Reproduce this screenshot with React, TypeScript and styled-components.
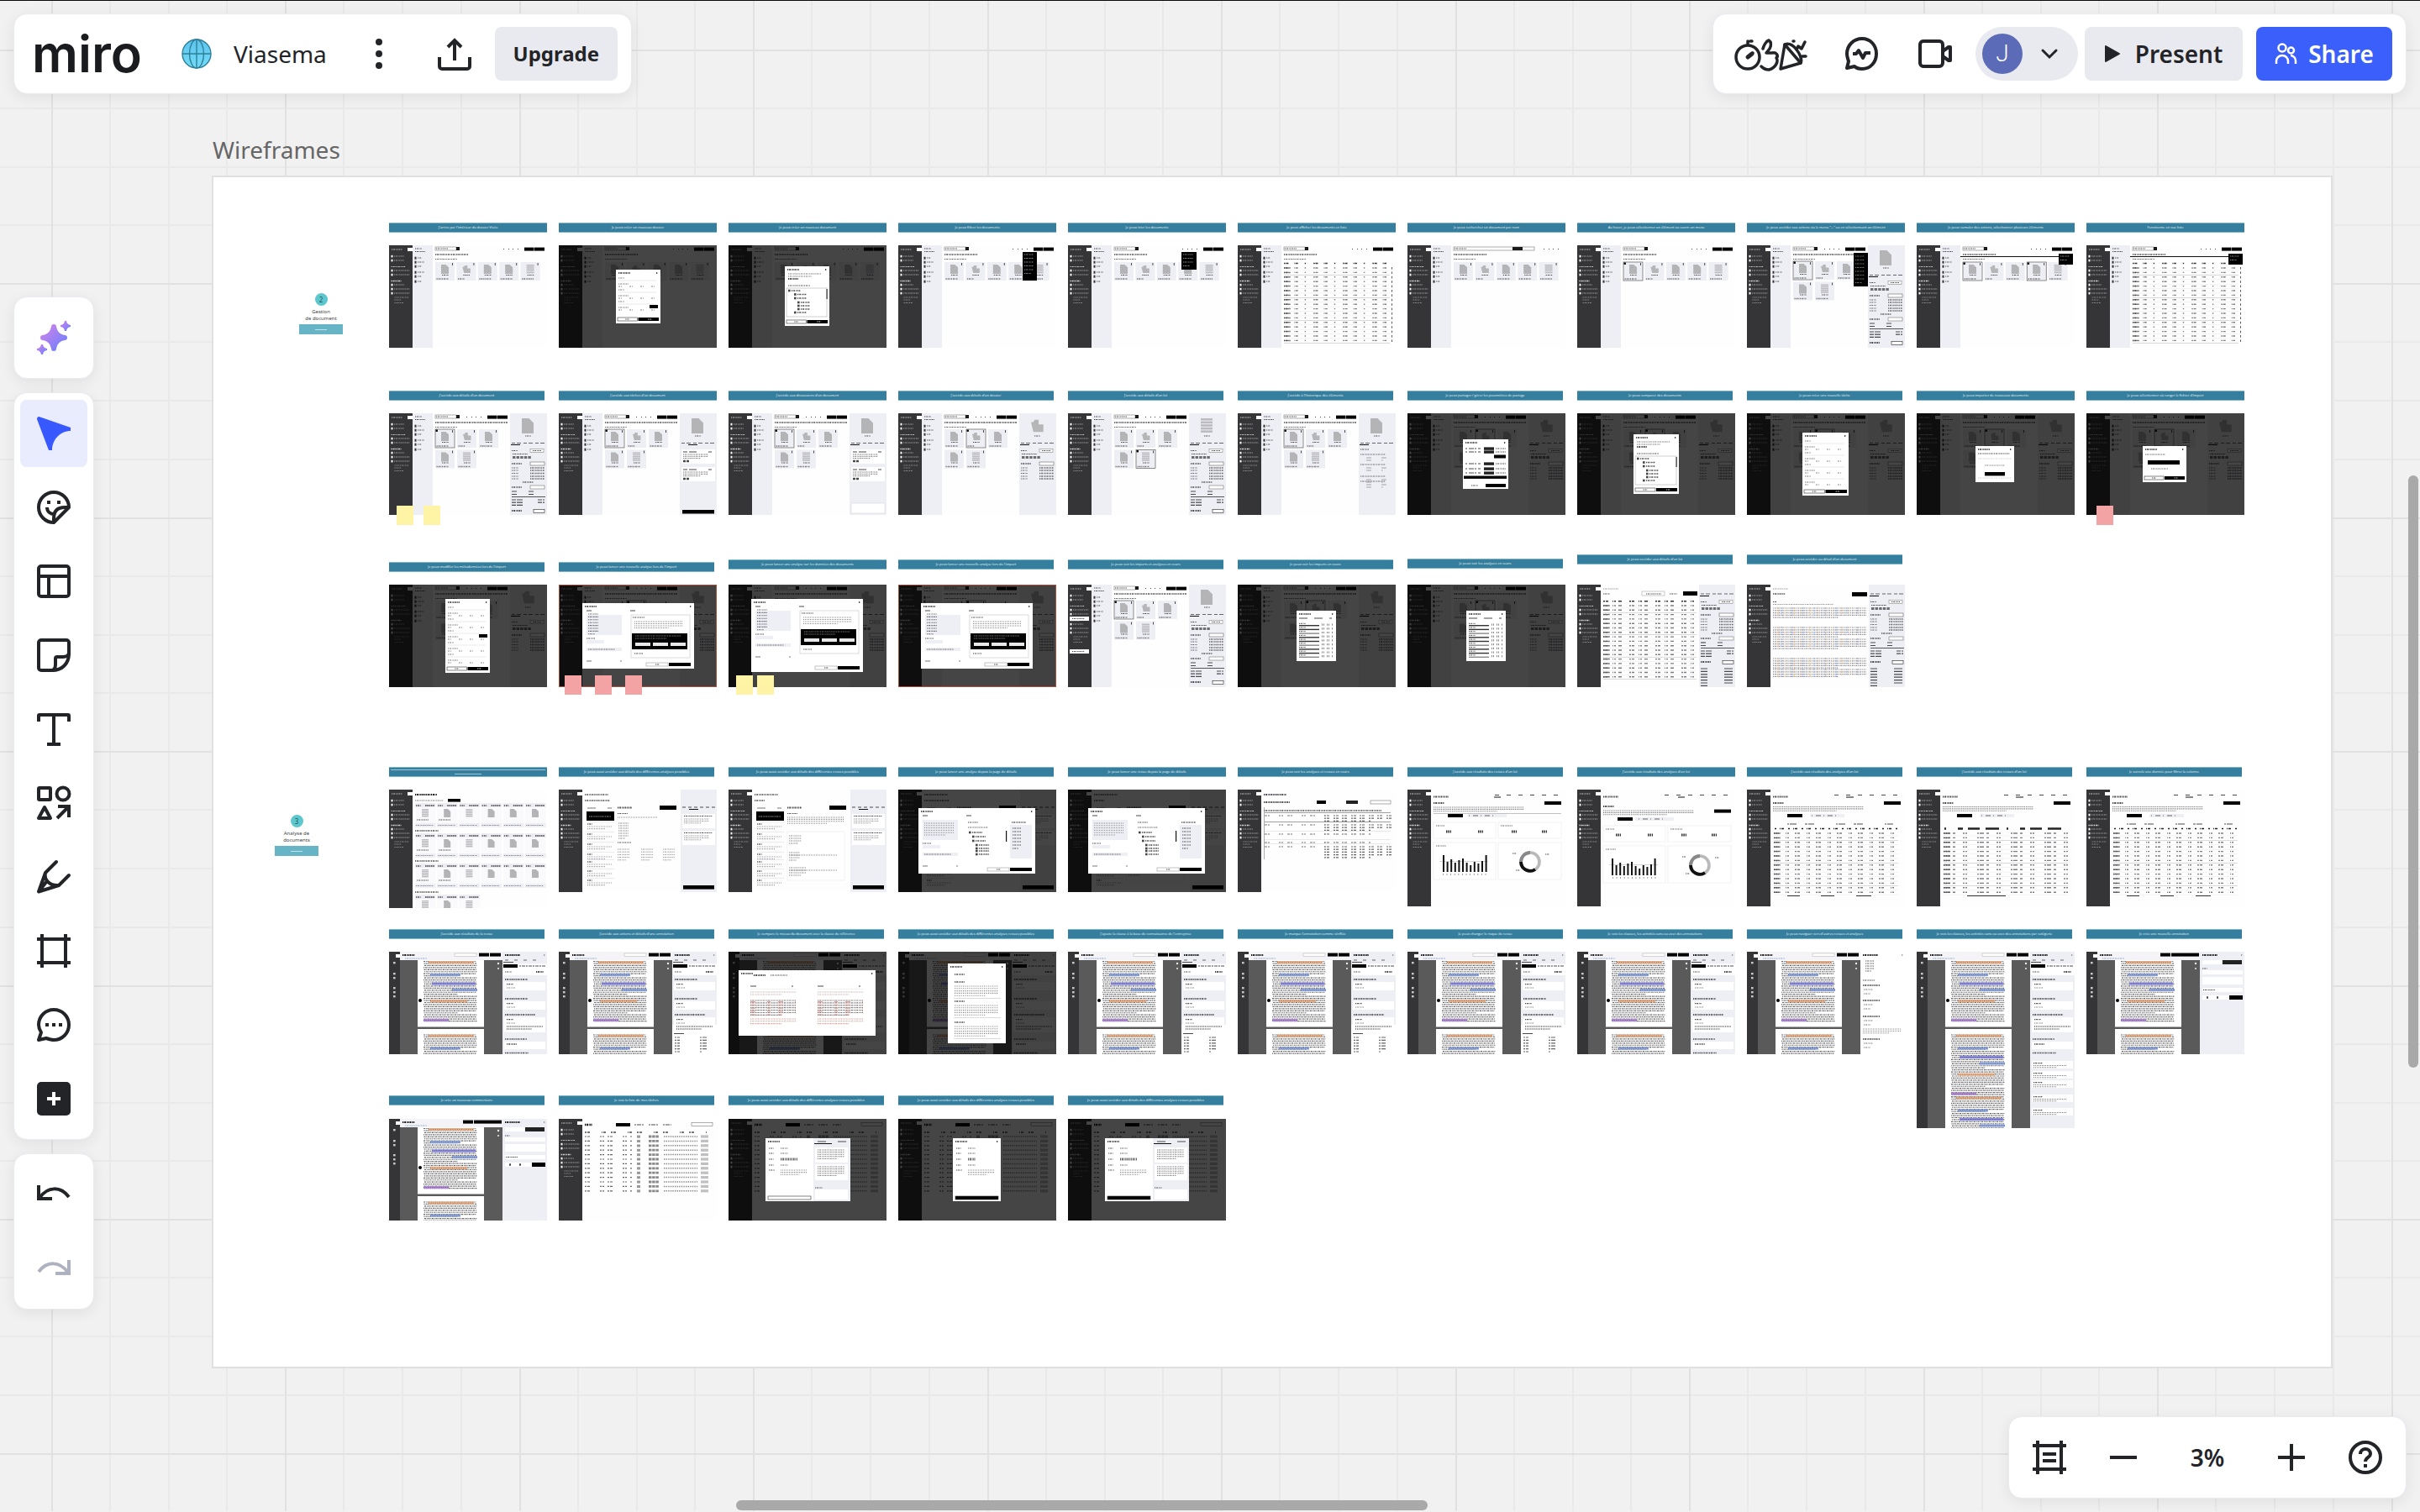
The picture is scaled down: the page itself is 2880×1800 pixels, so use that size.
import React from 'react';
import styled, { createGlobalStyle } from 'styled-components';

const INK = '#222428';

const GlobalStyle = createGlobalStyle`
  *, *::before, *::after { box-sizing: border-box; }
  html, body, #root { height: 100%; margin: 0; }
  body {
    overflow: hidden;
    color: ${INK};
    font-family: "Noto Sans", "Open Sans", sans-serif;
  }
  button { font: inherit; color: inherit; }
`;

/* ---------- page ---------- */

const Page = styled.main`
  position: relative;
  height: 100%;
  overflow: hidden;
  background: #f1f1f1;
  border-top: 1px solid #0c0c0c;
`;

const GridLayer = styled.svg`
  position: absolute;
  inset: -1px 0 0;
  width: 100%;
  height: 100%;
`;

/* ---------- floating panels ---------- */

const Panel = styled.div`
  display: flex;
  align-items: center;
  background: #fff;
  border: 1px solid #e9eaf2;
  border-radius: 16px;
  box-shadow: 0 4px 16px rgba(34, 36, 40, 0.08);
`;

const BoardBar = styled(Panel)`
  position: absolute;
  top: 15px;
  left: 16px;
  height: 96px;
  padding: 0 16px 0 21px;
`;

const ShareBar = styled(Panel)`
  position: absolute;
  top: 15px;
  right: 16px;
  height: 96px;
  gap: 8px;
  padding: 0 16px 0 10px;
`;

const ZoomBar = styled(Panel)`
  position: absolute;
  right: 16px;
  bottom: 16px;
  gap: 8px;
  padding: 8px;
`;

const ToolColumn = styled.nav`
  position: absolute;
  top: 352px;
  left: 16px;
  display: flex;
  flex-direction: column;
  gap: 16px;
`;

const ToolPanel = styled(Panel)`
  flex-direction: column;
  gap: 8px;
  padding: 8px 7px;
`;

const IconButton = styled.button<{ $width?: number; $active?: boolean; $muted?: boolean }>`
  display: flex;
  align-items: center;
  justify-content: center;
  width: ${(p) => p.$width ?? 80}px;
  height: 80px;
  padding: 0;
  border: 0;
  border-radius: 8px;
  background: ${(p) => (p.$active ? '#e8ecfc' : 'transparent')};
  color: ${(p) => (p.$active ? '#3859ff' : p.$muted ? '#aeb2c0' : INK)};
`;

const Logo = styled.a`
  width: 132px;
  margin-right: 46px;
  color: #1a1b1e;
  font: 600 61px/64px Inter, sans-serif;
  text-decoration: none;
`;

const BoardName = styled.button`
  display: flex;
  align-items: center;
  gap: 26px;
  margin-right: 22px;
  padding: 0;
  border: 0;
  background: none;
  font-size: 28px;
  line-height: 40px;
`;

const ButtonPair = styled.div`
  display: flex;
  gap: 10px;
  margin-right: 8px;
`;

const Action = styled.button<{ $kind: 'upgrade' | 'present' | 'share' }>`
  display: flex;
  align-items: center;
  justify-content: center;
  gap: ${(p) => (p.$kind === 'present' ? 18 : 14)}px;
  width: ${(p) => ({ upgrade: 146, present: 188, share: 162 })[p.$kind]}px;
  height: 64px;
  margin-left: ${(p) => (p.$kind === 'share' ? 8 : 0)}px;
  padding: 0;
  border: 0;
  border-radius: 8px;
  background: ${(p) => (p.$kind === 'share' ? '#3b5ffa' : '#e9eaef')};
  color: ${(p) => (p.$kind === 'share' ? '#fff' : INK)};
  font-size: ${(p) => (p.$kind === 'upgrade' ? 24 : 28)}px;
  font-weight: ${(p) => (p.$kind === 'upgrade' ? 700 : 600)};
  line-height: 40px;
`;

const AccountButton = styled.button`
  display: flex;
  align-items: center;
  gap: 22px;
  width: 122px;
  height: 64px;
  padding: 0 8px;
  border: 0;
  border-radius: 32px;
  background: #e9eaef;
`;

const Avatar = styled.span`
  display: flex;
  align-items: center;
  justify-content: center;
  width: 48px;
  height: 48px;
  border-radius: 50%;
  background: #5c6bb8;
  color: #fff;
  font-family: Roboto, sans-serif;
  font-size: 28px;
  font-weight: 300;
  line-height: 48px;
`;

const ZoomLevel = styled.button`
  width: 104px;
  height: 80px;
  padding: 0;
  border: 0;
  background: none;
  font-size: 28px;
  font-weight: 600;
`;

const Scroll = styled.div<{ $axis: 'x' | 'y' }>`
  position: absolute;
  border-radius: 6px;
  background: #a9a9a9;
  ${(p) =>
    p.$axis === 'x'
      ? 'left: 30.4%; width: 28.6%; bottom: 2px; height: 12px;'
      : 'top: 31.4%; height: 39.2%; right: 2px; width: 12px;'}
`;

/* ---------- board ---------- */

const FrameTitle = styled.h1`
  position: absolute;
  top: 157px;
  left: 253px;
  margin: 0;
  color: #666;
  font-size: 28px;
  font-weight: 400;
  line-height: 40px;
`;

const Frame = styled.section`
  position: absolute;
  top: 208px;
  left: 252px;
  width: 2524px;
  height: 1420px;
  background: #fff;
  border: 2px solid #e0e0e0;
`;

const Placed = styled.div.attrs<{ $x: number; $y: number }>((p) => ({
  style: { left: p.$x - 254, top: p.$y - 211 },
}))<{ $x: number; $y: number }>`
  position: absolute;
`;

const Banner = styled.div<{ $wide?: boolean }>`
  width: ${(p) => (p.$wide ? 188 : 185)}px;
  height: 12px;
  border-top: 1px solid #7db5c8;
  border-bottom: 1px solid #7db5c8;
  background: #367e9e;
  color: #edf6f9;
  font-family: "Open Sans", "Noto Sans", sans-serif;
  font-size: 4px;
  line-height: 10px;
  text-align: center;
  white-space: nowrap;
`;

const Sticky = styled.div<{ $tone: 'yellow' | 'pink' }>`
  width: 20px;
  height: 23px;
  background: ${(p) => (p.$tone === 'yellow' ? '#fff3a5' : '#f3a3a3')};
`;

const Chapter = styled.div`
  display: flex;
  flex-direction: column;
  align-items: center;
  width: 52px;
  color: #444;
  font-size: 6px;
  line-height: 8px;
  text-align: center;
`;

const ChapterNumber = styled.span`
  width: 15px;
  height: 15px;
  margin-bottom: 3px;
  border-radius: 50%;
  background: #5cc8ce;
  color: #24555a;
  font-size: 8px;
  line-height: 15px;
`;

const ChapterTag = styled.span`
  display: flex;
  align-items: center;
  justify-content: center;
  width: 100%;
  height: 12px;
  margin-top: 3px;
  background: #68b4c7;
  &::after {
    content: '';
    width: 14px;
    height: 1px;
    background: #c3e3ea;
  }
`;

const Shot = styled.svg`
  display: block;
`;

/* ---------- wireframe drawings ---------- */

type BoxProps = { x: number; y: number; w: number; h: number; f?: string; s?: string };
const Box = ({ x, y, w, h, f = '#fff', s }: BoxProps) => (
  <rect x={x} y={y} width={w} height={h} fill={f} stroke={s} strokeWidth={s ? 0.6 : 0} />
);

type LineProps = { x: number; y: number; w: number; c?: string; t?: number; d?: string };
const Line = ({ x, y, w, c = '#4a4a4e', t = 1.2, d = '1.3 .9 1.8 .8 .8 .7' }: LineProps) => (
  <path d={`M${x} ${y}h${w}`} stroke={c} strokeWidth={t} strokeDasharray={d} />
);

const Lines = ({ n, step, y, ...rest }: LineProps & { n: number; step: number }) => (
  <>
    {Array.from({ length: n }, (_, i) => (
      <Line key={i} y={y + i * step} {...rest} w={i === n - 1 ? rest.w * 0.7 : rest.w} />
    ))}
  </>
);

const Sidebar = ({ h }: { h: number }) => (
  <g>
    <Box x={0} y={0} w={28} h={h} f="#353537" />
    <Box x={22} y={3} w={6} h={4} />
    <Line x={3} y={5} w={13} c="#c9c9cc" />
    {[13, 18, 30, 35, 47, 52, 57].map((y) => (
      <g key={y}>
        <Box x={2.5} y={y - 1.2} w={2} h={2.6} />
        <Line x={6} y={y} w={y > 25 && y !== 47 ? 19 : 12} c="#a4a4a8" t={1.1} />
      </g>
    ))}
    <Line x={2.5} y={25.5} w={17} c="#c9c9cc" t={1.1} />
    <Line x={2.5} y={42.5} w={12} c="#e4e4e6" t={1.3} />
    <Line x={6.5} y={62} w={17} c="#8b8b90" t={1} />
    <Line x={6.5} y={65} w={8} c="#8b8b90" t={1} />
    <Line x={6.5} y={68.5} w={11} c="#8b8b90" t={1} />
  </g>
);

const Folders = ({ h }: { h: number }) => (
  <g>
    <Box x={28} y={0} w={24} h={h} f="#eeeef5" />
    <Line x={31} y={4} w={8} />
    <Line x={31} y={7.5} w={12} />
    {[15, 20, 25, 32, 37, 43].map((y) => (
      <g key={y}>
        <Box x={30.5} y={y - 1.3} w={2} h={3} f="#333" />
        <Line x={34} y={y} w={y % 2 ? 5 : 8} c="#55555a" />
      </g>
    ))}
  </g>
);

const Doc = ({ x, y, w, h, kind }: { x: number; y: number; w: number; h: number; kind: number }) => {
  if (kind === 1)
    return <path d={`M${x} ${y + h * 0.25}h${w * 0.2}l${w * 0.1}-${h * 0.15}h${w * 0.35}v${h * 0.3}h${w * 0.4}v${h * 0.5}h-${w * 0.85}z`} fill="#b6b6b8" />;
  if (kind === 2)
    return (
      <g>
        {[0, 1, 2, 3, 4].map((i) => (
          <Box key={i} x={x} y={y + (i * h) / 5} w={w} h={h / 7} f="#bcbcc0" />
        ))}
      </g>
    );
  return <path d={`M${x} ${y}h${w * 0.6}l${w * 0.4} ${h * 0.3}v${h * 0.7}h-${w}z`} fill="#b4b4b6" />;
};

const Card = ({ x, y, kind, on }: { x: number; y: number; kind: number; on?: boolean }) => (
  <g>
    <Box x={x} y={y} w={23} h={22} f="#eeeef5" s={on ? '#444' : undefined} />
    {on && <Box x={x + 0.5} y={y + 0.5} w={2.4} h={2.4} f="#000" />}
    <Line x={x + 20} y={y + 2.5} w={1} t={3} />
    <Doc x={x + 7} y={y + 3} w={9} h={11} kind={kind} />
    <Line x={x + 8} y={y + 15.5} w={8} t={1} />
    <Line x={x + 1.5} y={y + 20} w={kind === 1 ? 8 : 14} c="#77777c" t={1.3} />
  </g>
);

const KINDS = [0, 1, 0, 0, 2];

const TopBar = ({ narrow, wide }: { narrow?: boolean; wide?: boolean }) => {
  const r = narrow ? 142 : 186;
  return (
    <g>
      <Box x={55} y={2} w={wide ? 96 : 25} h={4} s="#77777c" />
      <Line x={56} y={4} w={14} />
      <Box x={wide ? 125 : 80} y={2} w={wide ? 12 : 4} h={4} f="#1b1b1d" />
      <Line x={r - (wide ? 24 : 50)} y={4.5} w={20} d="1 5 1 4" />
      {!wide && <Box x={r - 25} y={2.6} w={11.5} h={4} f="#000" />}
      {!wide && <Box x={r - 13} y={2.6} w={12} h={4} f="#000" />}
      <Line x={55} y={11} w={narrow ? 86 : 40} t={1.5} />
      <Line x={55} y={16.5} w={26} c="#66666a" t={1} />
    </g>
  );
};

const SidePanel = ({ h, sparse, kind = 0, x = 144 }: { h: number; sparse?: number; kind?: number; x?: number }) => (
  <g>
    <Box x={x} y={0} w={188 - x} h={h} f="#eeeef5" />
    {x === 144 && <Doc x={x + 14} y={6} w={14} h={18} kind={kind} />}
    {x === 144 && <Line x={x + 18} y={27} w={7} />}
    <Line x={x + 2} y={x === 144 ? 35.5 : 11} w={39} c="#66666a" d="4 2 5 3" />
    <Box x={x + (sparse === 1 ? 10 : 1)} y={x === 144 ? 37 : 13} w={11} h={1} f="#111" />
    {sparse === 1 || sparse === 2 ? (
      <g>
        {[43, 64].map((y) => (
          <g key={y}>
            <Box x={x + 2} y={y} w={40} h={17} />
            <Line x={x + 4} y={y + 3} w={34} d="5 2 9 14" />
            <Lines x={x + 4} y={y + 6} n={3} step={2.3} w={30} t={1} c="#77777c" />
            <Line x={x + 4} y={y + 14} w={8} t={2.4} d="3 1" />
          </g>
        ))}
        {sparse === 1 ? <Box x={x + 3} y={115} w={38} h={4.5} f="#000" /> : <Box x={x + 2} y={107} w={40} h={12} s="#d6d6df" />}
      </g>
    ) : sparse === 3 ? (
      <g>
        <Line x={x + 2} y={43} w={10} />
        {[49, 61, 75, 81].map((y) => (
          <g key={y}>
            <Line x={x + 2} y={y} w={30} c="#66666a" t={1} />
            <Lines x={x + 9} y={y + 4} n={2} step={3} w={28} c="#99999e" t={0.9} d="6 12" />
          </g>
        ))}
      </g>
    ) : (
      <g transform={x === 144 ? undefined : 'translate(0 -24)'}>
        <Line x={x + 2} y={44.5} w={7} />
        <Box x={x + 24} y={42.5} w={16} h={4} s="#888" />
        <Line x={x + 27} y={44.5} w={10} />
        <Line x={x + 3} y={52.5} w={23} t={3} c="#6d6d70" d="3.4 1.2" />
        <Line x={x + 3} y={48.5} w={18} t={1} />
        <Line x={x + 2} y={60} w={12} t={1.6} />
        <Box x={x + 24} y={58} w={17} h={4} s="#666" />
        {[65, 68, 71.5, 75, 78].map((y) => (
          <g key={y}>
            <Line x={x + 2} y={y} w={8} c="#66666a" />
            <Line x={x + 24} y={y} w={17} t={1.4} c="#66666a" />
          </g>
        ))}
        {kind !== 1 && (
          <g>
            <Line x={x + 15} y={82} w={13} c="#111" />
            <Line x={x + 2} y={88} w={12} t={1.6} />
            <Box x={x + 24} y={86} w={17} h={4} s="#777" />
            <Lines x={x + 2} y={93} n={2} step={3.5} w={38} d="6 14" />
            <Box x={x + 2} y={99} w={40} h={1} f="#555" />
            <Lines x={x + 2} y={103} n={3} step={3.2} w={39} d="5 1 7 18" />
            <Line x={x + 2} y={116} w={12} t={2} />
            <Box x={x + 28} y={114.5} w={13} h={4} s="#222" />
          </g>
        )}
        {x !== 144 && <Lines x={x + 2} y={124} n={7} step={3.4} w={39} d="8 20 10 4" />}
      </g>
    )}
  </g>
);

type RowsProps = { x: number; w: number; y: number; n: number; step: number; d?: string; rules?: boolean; head?: boolean };
const Rows = ({ x, w, y, n, step, d = '1.6 .8 3 7 1 .7 2.6 8 1.4 9', rules = true, head = true }: RowsProps) => (
  <g>
    {head && <Line x={x} y={y - step} w={w} t={1.5} c="#333" d={d} />}
    {Array.from({ length: n }, (_, i) => (
      <g key={i}>
        <Line x={x} y={y + i * step} w={w} t={1.4} c="#7d7d82" d={d} />
        <Line x={x} y={y + i * step} w={8} t={1.5} />
        {rules && <Box x={x} y={y + (i + 0.5) * step} w={w} h={0.5} f={i % 5 === 1 ? '#b5b5b8' : '#e9e9ec'} />}
      </g>
    ))}
  </g>
);

type Menu = [number, number, number, number];

const Files = ({ h, on = [], menu, table, wide }: { h: number; on?: number[]; menu?: Menu; table?: boolean; wide?: boolean }) => (
  <g>
    <Sidebar h={h} />
    <Folders h={h} />
    <TopBar wide={wide} />
    {table ? (
      <g>
        <Rows x={55} w={126} y={27} n={17} step={5.4} />
        {Array.from({ length: 17 }, (_, i) => (
          <Box key={i} x={183} y={26 + i * 5.4} w={0.8} h={2.6} f="#333" />
        ))}
      </g>
    ) : (
      KINDS.map((k, i) => <Card key={i} x={55 + i * 25.4} y={20} kind={k} on={on.includes(i)} />)
    )}
    {menu && (
      <g>
        {menu[0] > 160 && <Box x={52} y={13} w={134} h={1} f="#111" />}
        <Box x={menu[0]} y={menu[1]} w={menu[2]} h={menu[3]} f="#000" />
        <Lines x={menu[0] + 2} y={menu[1] + 3} n={Math.floor(menu[3] / 5)} step={4.5} w={menu[2] - 6} c="#8a8a8e" t={1} />
      </g>
    )}
  </g>
);

const Detail = ({ h, sparse, kind, on = [0], menu, badge }: { h: number; sparse?: number; kind?: number; on?: number[]; menu?: boolean; badge?: boolean }) => (
  <g>
    <Sidebar h={h} />
    <Folders h={h} />
    <TopBar narrow />
    {[0, 1, 0, 0, 2].map((k, i) => (
      <Card key={i} x={55 + (i % 3) * 26} y={i < 3 ? 19 : 43.5} kind={k} on={on.includes(i)} />
    ))}
    <SidePanel h={h} sparse={sparse} kind={kind} />
    {menu && (
      <g>
        <Box x={127} y={9} w={17} h={40} f="#000" />
        <Lines x={129} y={13} n={8} step={4.5} w={11} c="#77777a" t={1} />
      </g>
    )}
    {badge && (
      <g>
        <Box x={2} y={38} w={23} h={5} />
        <Box x={2} y={77} w={23} h={5} />
        <Line x={5} y={40.5} w={15} />
        <Line x={5} y={79.5} w={15} />
      </g>
    )}
  </g>
);

const TextPage = ({ h }: { h: number }) => (
  <g>
    <Sidebar h={h} />
    <Line x={31} y={5} w={18} c="#99999e" t={1} />
    <Line x={31} y={11} w={15} t={1.6} />
    <Box x={125} y={9} w={18} h={5} f="#000" />
    <Line x={31} y={20.5} w={4} t={1} />
    <Line x={31} y={23.5} w={72} t={1} c="#99999e" />
    {[28, 51, 65, 88, 101].map((y, k) => (
      <g key={y}>
        <Lines x={31} y={y} n={k > 3 ? 4 : 5} step={2.8} w={111} c="#85858c" t={1.2} d="1 1 1.6 1" />
        <Lines x={36} y={y} n={4} step={2.8} w={100} c="#e5b58a" t={1.2} d="2 7 1 9" />
        <Lines x={40} y={y} n={4} step={2.8} w={98} c="#9aaede" t={1.2} d="2 11" />
      </g>
    ))}
    <SidePanel h={h} x={145} />
  </g>
);

const LotTable = ({ h }: { h: number }) => (
  <g>
    <Sidebar h={h} />
    <Line x={31} y={5} w={18} c="#99999e" t={1} />
    <Line x={31} y={11} w={8} />
    <Box x={77} y={8} w={27} h={5} s="#aaa" />
    <Line x={82} y={11} w={18} />
    <Line x={110} y={11} w={9} />
    <Box x={126} y={8} w={17} h={5} f="#000" />
    <Rows x={31} w={111} y={25} n={17} step={5.3} d="2 1 3 5 1 1 2 3 4 9" />
    <SidePanel h={h} x={145} />
  </g>
);

const CardGrid = ({ h }: { h: number }) => (
  <g>
    <Sidebar h={h} />
    <Line x={31} y={6} w={26} t={1.8} c="#111" />
    <Line x={31} y={13} w={34} c="#77777c" />
    <Box x={70} y={11} w={15} h={3.6} f="#000" />
    {[16, 52, 88, 125].map((y, r) => (
      <g key={y}>
        {r > 0 && <Line x={31} y={y - 3} w={28} t={1.6} />}
        {Array.from({ length: r === 3 ? 3 : 6 }, (_, i) => (
          <g key={i}>
            <Box x={31 + i * 26.2} y={y} w={24.5} h={29} f="#fafafc" />
            <Box x={31 + i * 26.2} y={y} w={24.5} h={5} f="#ececf2" />
            <Line x={32 + i * 26.2} y={y + 3} w={6} t={1.6} />
            <Line x={43 + i * 26.2} y={y + 3} w={11} t={1.8} c="#66666a" d="1.6 .7" />
            <Doc x={39 + i * 26.2} y={y + 7} w={8} h={10} kind={i % 2 || i === 4 ? 0 : 2} />
            {i < 2 && <Line x={33 + i * 26.2} y={y + 20} w={14} />}
            <Box x={31 + i * 26.2} y={y + 24} w={24.5} h={5} f="#eeeef5" />
            <Line x={32 + i * 26.2} y={y + 26.5} w={21} c="#88888d" />
          </g>
        ))}
      </g>
    ))}
  </g>
);

const Analysis = ({ h, alt }: { h: number; alt?: boolean }) => (
  <g>
    <Sidebar h={h} />
    <Line x={31} y={6} w={28} t={1.6} />
    <Line x={31} y={13} w={alt ? 12 : 30} t={1.6} />
    <Line x={34} y={22} w={29} c="#77777c" d="10 14" />
    <Box x={33} y={26} w={33} h={11} f="#000" />
    <Line x={36} y={32} w={26} c="#99999c" />
    {[41, 53, 65, 77, 86, 97, 108].map((y) => (
      <g key={y}>
        <Line x={34} y={y} w={6} c="#111" />
        <Lines x={34} y={y + 3} n={2} step={2.6} w={30} c="#99999e" t={1.1} d="1 1" />
        <Box x={34} y={y - 3} w={32} h={0.6} f="#dcdce4" />
      </g>
    ))}
    <Line x={70} y={21.5} w={17} t={1.8} />
    <Box x={120} y={19} w={20} h={5} f="#000" />
    <Line x={70} y={28.5} w={12} />
    <Lines x={70} y={33} n={alt ? 4 : 1} step={2.4} w={68} c="#88888d" t={1.1} d="1 1" />
    {alt ? (
      <g>
        <Box x={70} y={50} w={68} h={58} s="#e9e9ee" />
        <Lines x={72} y={55} n={4} step={3} w={15} c="#88888d" />
        <Lines x={72} y={75} n={4} step={3} w={13} c="#88888d" t={1} />
        <Lines x={72} y={93} n={4} step={3} w={20} c="#88888d" t={1} />
        <Line x={72} y={78} w={58} c="#88888d" t={1} d="1 1" />
        <Line x={72} y={96} w={58} c="#88888d" t={1} d="1 1" />
      </g>
    ) : (
      <g>
        <Lines x={71} y={40} n={7} step={3} w={12} c="#88888d" t={1} />
        <Line x={70} y={63} w={16} />
        {[70, 98, 124].map((x) => (
          <Lines key={x} x={x} y={71} n={5} step={3.2} w={14} c="#99999e" t={1} />
        ))}
      </g>
    )}
    <Box x={145} y={0} w={43} h={h} f="#eeeef5" />
    <Line x={147} y={21} w={39} d="4 3" />
    <Box x={155} y={23} w={11} h={1} f="#111" />
    {[29, 49].map((y) => (
      <g key={y}>
        <Box x={147} y={y} w={39} h={17} />
        <Line x={149} y={y + 2.5} w={34} />
        <Lines x={149} y={y + 6} n={3} step={2.4} w={30} c="#99999e" t={1} />
      </g>
    ))}
    <Box x={148} y={114} w={37} h={4.6} f="#000" />
  </g>
);

const Queue = ({ h }: { h: number }) => (
  <g>
    <Sidebar h={h} />
    <Line x={31} y={6} w={27} t={1.8} />
    <Line x={31} y={15} w={31} t={1.8} />
    <Box x={94} y={13} w={11} h={4} f="#000" />
    <Box x={129} y={13} w={14} h={4} f="#222" />
    <Box x={158} y={13} w={24} h={4} s="#777" />
    <Line x={31} y={25} w={140} t={1.5} />
    {[30, 41, 52, 62, 67].map((y, i) => (
      <g key={y}>
        <Line x={32} y={y + 1} w={72} d="3 1 2 11 2 1 2 5" c="#77777c" />
        <Lines x={103} y={y + 1} n={i === 4 ? 5 : i === 1 || i === 0 ? 3 : 1} step={3.2} w={80} d="2 1 3 5 2 1 3 4" c="#66666a" />
        <Box x={32} y={y - 3} w={150} h={0.7} f={i < 2 ? '#77777c' : '#e0e0e4'} />
      </g>
    ))}
    <Box x={31} y={21} w={0.6} h={62} f="#777" />
  </g>
);

const BARS = [20, 12, 15, 11, 14, 16, 11, 8, 12, 10, 13, 20];

const Dashboard = ({ h, low }: { h: number; low?: boolean }) => {
  const o = low ? 4 : 0;
  return (
    <g>
      <Sidebar h={h} />
      <Line x={31} y={8.5} w={18} t={1.8} />
      <Line x={104} y={6.5} w={80} d="5 9" />
      <Box x={low ? 120 : 103} y={8.5} w={8} h={1} f="#111" />
      <Line x={31} y={16 + o} w={13} t={1.8} />
      <Box x={163} y={14 + o * 2.4} w={20} h={4} f="#000" />
      <Lines x={31} y={21 + o} n={3} step={2.4} w={108} c="#77777c" t={1.1} d="1.2 1" />
      <Box x={48} y={29 + o} w={18} h={4} f="#000" />
      <Box x={low ? 69 : 72} y={29 + o} w={46} h={4} f="#eeeef5" />
      <Line x={73} y={31 + o} w={30} c="#66666a" d="1 4 6 3" />
      {!low && <Box x={31} y={28} w={152} h={0.6} f="#999" />}
      <Box x={31} y={39 + o} w={74} h={19} s="#e9e9ee" />
      <Box x={108} y={39 + o} w={75} h={19} s="#e9e9ee" />
      <Line x={34} y={43 + o} w={10} c="#66666a" t={1} />
      <Line x={111} y={43 + o} w={14} c="#66666a" t={1} />
      {[46, 84, 124, 160].map((x) => (
        <Line key={x} x={x} y={50 + o} w={6} t={3} c="#333" d="1.5 .9" />
      ))}
      <Box x={31} y={63 + o} w={74} h={44} s="#e9e9ee" />
      <Box x={108} y={63 + o} w={75} h={44} s="#e9e9ee" />
      <Line x={34} y={67 + o} w={12} c="#66666a" t={1} />
      <Box x={38} y={85 + o} w={58} h={0.5} f="#aaa" />
      {BARS.map((b, i) => (
        <Box key={i} x={(low ? 41 : 42) + i * 4.6} y={98 + o - b} w={2} h={b} f="#111" />
      ))}
      <Line x={42} y={101 + o} w={52} c="#88888d" t={2} d=".8 3.8" />
      <circle cx={146} cy={86 + o} r={11} fill="none" stroke="#b9b9bc" strokeWidth={3.6} />
      <path d={`M135 ${86 + o}a11 11 0 0 0 17 9`} fill="none" stroke="#111" strokeWidth={3.8} />
      <path d={`M135 ${86 + o}a11 11 0 0 1 11-11`} fill="none" stroke="#88888b" strokeWidth={3.8} />
      <Line x={125} y={76 + o} w={4} t={1} />
      <Line x={164} y={77 + o} w={5} t={1} />
      <Line x={129} y={96 + o} w={5} t={1} />
    </g>
  );
};

const Matrix = ({ h, alt }: { h: number; alt?: boolean }) => (
  <g>
    <Sidebar h={h} />
    <Line x={31} y={8.5} w={18} t={1.8} />
    <Line x={104} y={6.5} w={80} d="5 9" />
    <Box x={118} y={8.5} w={9} h={1} f="#111" />
    <Line x={31} y={16} w={13} t={1.8} />
    <Box x={163} y={14} w={20} h={4} f="#000" />
    <Lines x={31} y={20.5} n={3} step={2.4} w={108} c="#77777c" t={1.1} d="1.2 1" />
    <Box x={48} y={29} w={18} h={4} f="#000" />
    <Box x={75} y={29} w={41} h={4} f="#eeeef5" />
    <Line x={77} y={31} w={30} c="#66666a" d="1 4 6 3" />
    {!alt && <Line x={48} y={41} w={126} d="2 1 8 10 3 1 7 26" />}
    <Line x={33} y={46.5} w={147} t={alt ? 2.4 : 1.5} c="#222" d={alt ? '2 14 6 6 14 7 16 9' : '2 4 1 1 3 5'} />
    <Rows x={32} w={148} y={52} n={14} step={5.4} head={false} d={alt ? '2 1 5 3 3 9 2 1 2 12' : '2 1 3 8 1 1 2 7'} />
    <Box x={alt ? 60 : 48} y={126} w={alt ? 46 : 15} h={1} f="#333" />
    {!alt && <Box x={88} y={126} w={16} h={1} f="#333" />}
    {!alt && <Box x={130} y={126} w={18} h={1} f="#333" />}
  </g>
);

const MARKS: [number, number, number, string][] = [
  [2, 6, 54, '#eeb184'],
  [17, 8, 36, '#8ba5de'],
  [27.5, 10, 52, '#8585e0'],
  [35, 34, 30, '#8ba5de'],
  [48, 8, 44, '#eeb184'],
  [71, 0, 30, '#b188d6'],
];

const Passage = ({ y, n }: { y: number; n: number }) => (
  <g>
    {Array.from({ length: n }, (_, i) => (
      <Line
        key={i}
        x={41 + (i % 3) * 0.5}
        y={y + 1 + i * 2.45}
        w={i % 9 === 7 ? 40 : 63}
        c="#66666a"
        t={1.2}
        d={i % 2 ? '1.2 .9 1.8 .6' : '2 .8 1 .7'}
      />
    ))}
    {MARKS.filter((m) => m[0] < n * 2.45).map(([dy, dx, w, f]) => (
      <g key={dy}>
        <Box x={41 + dx} y={y + dy - 1.4} w={w} h={3} f={f} />
        <Line x={41 + dx} y={y + dy} w={w} c="#55556a" t={0.7} d="1 1.6" />
      </g>
    ))}
  </g>
);

const Viewer = ({ h, tone = 'lilac', form }: { h: number; tone?: 'lilac' | 'mixed' | 'white'; form?: boolean }) => (
  <g>
    <Box x={0} y={0} w={188} h={h} f="#5a5a5a" />
    <Box x={0} y={0} w={13} h={h} f="#353537" />
    {[12, 25, 30, 42, 47, 52].map((y) => (
      <Box key={y} x={5} y={y} w={2.6} h={2.4} f="#c7c7ca" />
    ))}
    <Box x={13} y={0} w={122} h={10} f="#f3f3f8" />
    <Box x={8} y={3} w={5} h={4} />
    <Line x={16} y={4} w={15} t={2} c="#111" />
    <Line x={19} y={8} w={26} c="#8fa6c8" t={1} />
    {!form && <Box x={78} y={2} w={26} h={3.6} s="#bbb" />}
    <Box x={form ? 88 : 107} y={1.6} w={12} h={4} f="#000" />
    <Box x={form ? 101 : 120} y={1.6} w={form ? 33 : 13} h={4} f="#000" />
    <Box x={34} y={10} w={79} h={79.5} />
    <Passage y={10.5} n={30} />
    <Box x={34} y={92} w={79} h={h - 92} />
    <Passage y={98} n={h > 130 ? 31 : 10} />
    {h > 130 && <Passage y={172} n={16} />}
    <circle cx={37} cy={58} r={2} fill="#000" />
    <circle cx={130} cy={14} r={1.2} fill="#eee" />
    <circle cx={130} cy={20} r={1} fill="#eee" />
    <Box x={135} y={0} w={53} h={h} f={tone === 'white' ? '#fff' : '#eeeef5'} />
    {tone === 'mixed' && <Box x={135} y={87} w={53} h={h - 87} />}
    <Line x={138} y={4} w={18} t={2} c="#111" />
    <Line x={184} y={4} w={2} />
    {form ? (
      <g>
        <Box x={138} y={10} w={23} h={5} f="#fff" />
        <Box x={162} y={10} w={23} h={5} f="#222" />
        <Box x={138} y={22} w={48} h={5} />
        <Box x={138} y={30} w={48} h={9} />
        <Box x={138} y={43} w={48} h={5} />
        <Line x={138} y={20} w={6} t={1} />
        <Line x={139} y={45.5} w={14} t={1} />
        <Box x={138} y={52} w={33} h={5} />
        <Box x={170} y={52} w={16} h={5} f="#000" />
        <Line x={143} y={54.5} w={24} t={2.6} d="2 10" />
      </g>
    ) : tone === 'white' ? (
      <g>
        <Lines x={141} y={11} n={5} step={3} w={10} c="#555" />
        <Line x={138} y={34} w={14} />
        {[40, 58, 77, 104].map((y) => (
          <g key={y}>
            <Line x={138} y={y} w={20} t={1.4} c="#333" />
            <Lines x={139} y={y + 5} n={2} step={5} w={11} c="#77777c" />
          </g>
        ))}
        <Lines x={138} y={92} n={3} step={2.4} w={46} c="#88888d" t={1} d="1 1" />
      </g>
    ) : (
      <g>
        <Line x={138} y={10} w={42} c="#66666a" d="4 7" />
        <Box x={136} y={12} w={12} h={0.8} f="#222" />
        <Box x={136} y={14.5} w={52} h={5.5} />
        <Box x={136} y={15} w={17} h={4} f="#000" />
        <Line x={155} y={17} w={31} d="2 1 4 1" />
        <Box x={136} y={20} w={52} h={8} />
        <Line x={138} y={24} w={8} />
        <Line x={175} y={24} w={9} t={1.8} />
        {[36, 59, 78].map((y, i) => (
          <g key={y}>
            <Box x={137} y={y} w={49} h={i === 2 ? 18 : 10} />
            <Line x={138} y={y - 3} w={i === 2 ? 36 : 27} t={1.5} c="#333" />
            <Line x={140} y={y + 2.6} w={8} />
            <Line x={140} y={y + 7} w={10} c="#88888d" />
            {i === 2 && <Lines x={140} y={y + 11} n={2} step={3} w={43} t={1.3} c="#66666a" d="1 .9" />}
          </g>
        ))}
        {tone === 'mixed' ? (
          <g>
            <Box x={137} y={97} w={12} h={0.9} f="#333" />
            <Lines x={138} y={102} n={6} step={3.4} w={47} c="#66666a" d="2 1 3 24 2 1 5 20" />
          </g>
        ) : (
          <g>
            <Line x={138} y={104} w={26} t={1.4} />
            <Box x={137} y={107} w={49} h={9} />
            <Line x={140} y={110} w={12} t={1.6} />
            <Line x={138} y={120.5} w={28} t={1.4} />
          </g>
        )}
        {h > 130 &&
          [130, 142, 153, 170, 186].map((y) => (
            <g key={y}>
              <Box x={137} y={y} w={49} h={9} />
              <Line x={139} y={y + 2.6} w={11} />
              <Lines x={139} y={y + 5.5} n={2} step={2.3} w={40} t={1.1} c="#77777c" d="1 1" />
            </g>
          ))}
      </g>
    )}
  </g>
);

const Tasks = ({ h }: { h: number }) => (
  <g>
    <Sidebar h={h} />
    <Line x={31} y={7} w={9} t={2.4} c="#111" />
    <Box x={68} y={5} w={17} h={4} f="#000" />
    <Line x={90} y={7} w={44} d="2 1 5 1 2 6" />
    <Box x={158} y={4.5} w={25} h={4} s="#777" />
    <Line x={31} y={16} w={145} t={1.5} d="2 1 3 14 1 1 3 6" />
    {Array.from({ length: 13 }, (_, i) => {
      const y = 21 + i * 5.4;
      return (
        <g key={i}>
          <Line x={31} y={y} w={56} c="#66666a" d="2 1 3 12 2 1 2 4" />
          <Box x={93} y={y - 1.4} w={4} h={3} f="#99999c" />
          <Line x={107} y={y} w={12} t={2.8} c="#88888b" d="3.4 .8" />
          <Line x={125} y={y} w={40} c="#88888d" t={1.5} d="1.4 1.2" />
          <Box x={169} y={y - 1.6} w={9} h={3.2} f="#c0c0c3" />
        </g>
      );
    })}
  </g>
);

/* ---------- dialogs over a dimmed wireframe ---------- */

type DialogKind = 'form' | 'tree' | 'share' | 'short' | 'import' | 'split' | 'list' | 'diff' | 'prose' | 'task' | 'taskSplit';
type Dialog = { kind: DialogKind; at: [number, number, number, number]; black?: boolean };

const DialogArt = ({ kind, at, black }: Dialog) => {
  const [x, y, r, b] = at;
  const w = r - x;
  const buttons = (
    <g>
      <Box x={x + 2} y={b - 7} w={w / 2 - 3} h={4} s="#333" />
      <Box x={x + w / 2} y={b - 7} w={w / 2 - 2} h={4} f="#000" />
      <Line x={x + w / 4 - 2} y={b - 5} w={5} />
      <Line x={x + w * 0.72} y={b - 5} w={5} c="#ddd" />
    </g>
  );
  return (
    <g>
      <Box x={x} y={y} w={w} h={b - y} />
      <Line x={x + 3} y={y + 4} w={Math.min(14, w - 18)} t={1.5} c="#222" />
      <Line x={r - 5} y={y + 4} w={2} t={1.8} />
      {kind === 'form' && (
        <g>
          {Array.from({ length: Math.floor((b - y - 18) / 7) }, (_, i) => (
            <g key={i}>
              <Line x={x + 3} y={y + 10 + i * 7} w={i % 2 ? 12 : 7} c="#77777c" t={1} />
              <Line x={x + 3} y={y + 13 + i * 7} w={w - 8} c={i % 2 ? '#88888d' : '#dfdfe5'} t={i % 2 ? 1.1 : 0.7} d={i % 2 ? '2 1 1 9' : '60'} />
            </g>
          ))}
          {black && <Box x={r - 13} y={y + 42} w={10} h={4} f="#000" />}
          {buttons}
        </g>
      )}
      {kind === 'tree' && (
        <g>
          <Lines x={x + 4} y={y + 9} n={2} step={3} w={40} c="#77777c" t={1} />
          <Line x={x + 4} y={y + 15} w={12} t={1.8} />
          <Box x={x + 2} y={y + 26} w={w - 5} h={b - y - 37} s="#b0b0b4" />
          <Line x={x + 4} y={y + 23} w={26} t={1} />
          {[29, 33.5, 38, 43, 47, 51, 55].map((dy, i) => (
            <g key={dy}>
              <Box x={x + (i === 0 ? 4 : i < 3 || i > 5 ? 11 : 15)} y={y + dy - 1.3} w={2.6} h={2.6} f="#444" />
              <Line x={x + (i === 0 ? 8 : i < 3 || i > 5 ? 15 : 19)} y={y + dy} w={11} t={1.4} />
            </g>
          ))}
          <Box x={r - 3.4} y={y + 27} w={1} h={12} f="#111" />
          {buttons}
        </g>
      )}
      {kind === 'share' && (
        <g>
          {[11, 15, 29, 35, 40].map((dy) => (
            <g key={dy}>
              <Line x={x + 3} y={y + dy} w={18} d="2 2 6 1" />
              <Box x={x + 25} y={y + dy - 1.6} w={12} h={3.4} f="#222" />
              <Line x={x + 39} y={y + dy} w={12} t={1} />
            </g>
          ))}
          <Box x={r - 17} y={y + 18.5} w={14} h={4} f="#000" />
          <Box x={x + 1} y={y + 43.5} w={w - 3} h={3.4} f="#000" />
          <Line x={x + 10} y={b - 4} w={8} />
          <Box x={r - 27} y={b - 6} w={24} h={4} f="#000" />
        </g>
      )}
      {kind === 'short' && (
        <g>
          <Line x={x + 3} y={y + 9} w={38} />
          <Line x={x + 3} y={y + 15} w={40} c="#c5c5ca" t={0.8} />
          <Line x={x + 11} y={y + 23} w={24} c="#88888d" t={1} />
          <Box x={x + 11} y={y + 31} w={24} h={4.4} f="#000" />
          <Line x={x + 3} y={y + 38} w={40} c="#c5c5ca" t={0.8} />
        </g>
      )}
      {kind === 'import' && (
        <g>
          <Line x={x + 3} y={y + 10} w={24} c="#66666a" t={1} />
          <Box x={x + 6} y={y + 17} w={38} h={5} f="#000" />
          <Line x={x + 10} y={y + 27} w={20} c="#66666a" t={1} />
          {buttons}
        </g>
      )}
      {kind === 'list' && (
        <g>
          <Line x={x + 3} y={y + 9} w={w - 8} d="10 8" />
          {Array.from({ length: 9 }, (_, i) => (
            <g key={i}>
              <Box x={x + 3} y={y + 17 + i * 4.7} w={24} h={1.4} f={i % 3 === 2 ? '#888' : '#333'} />
              <Line x={x + 3} y={y + 15.3 + i * 4.7} w={8} t={1} />
              <Line x={x + 30} y={y + 16.6 + i * 4.7} w={13} t={2.2} c="#88888d" d="1 1 1 3" />
            </g>
          ))}
        </g>
      )}
      {kind === 'split' && (
        <g>
          <Line x={x + 5} y={y + 9} w={60} d="6 46" t={1} />
          <Box x={x + 5} y={y + 14} w={42} h={24} f="#eeeef5" />
          {black ? (
            <Lines x={x + 7} y={y + 13} n={8} step={3.4} w={12} t={1.1} c="#66666a" />
          ) : (
            <Lines x={x + 7} y={y + 18} n={6} step={2.8} w={36} t={1} c="#88888d" d="1 1" />
          )}
          <Line x={x + 5} y={y + 42} w={10} t={1} />
          <Box x={x + 5} y={y + 44} w={21} h={4} f="#eeeef5" />
          <Box x={x + 5} y={y + 53} w={42} h={4} f="#eeeef5" />
          <Line x={x + 7} y={y + 55} w={32} c="#66666a" />
          <Line x={x + 5} y={y + 69} w={42} c="#77777c" t={1} d="6 34" />
          {black ? (
            <g>
              <Box x={x + 58} y={y + 14} w={70} h={51} s="#c4c4c8" />
              <Line x={x + 60} y={y + 17} w={14} t={1} />
              <Lines x={x + 62} y={y + 22} n={4} step={2.5} w={58} c="#88888d" t={1} d="1 1" />
              <Box x={x + 59} y={y + 36} w={66} h={19} f="#000" />
              <Lines x={x + 63} y={y + 39} n={2} step={3} w={54} c="#77777a" t={1} />
              {[63, 84, 105].map((dx) => (
                <Box key={dx} x={x + dx} y={y + 47} w={18} h={4} f="#e8e8ea" />
              ))}
              <Line x={x + 62} y={y + 60} w={10} t={1} />
            </g>
          ) : (
            <g>
              <Line x={x + 59} y={y + 17} w={12} />
              <Line x={x + 59} y={y + 23} w={24} c="#66666a" />
              {[29, 34, 39, 44, 48, 51, 55].map((dy, i) => (
                <g key={dy}>
                  <Box x={x + (i === 0 ? 60 : i < 3 ? 64 : 68)} y={y + dy - 1.3} w={2.6} h={2.6} f="#444" />
                  <Line x={x + (i === 0 ? 64 : i < 3 ? 68 : 72)} y={y + dy} w={12} t={1.4} />
                </g>
              ))}
              <Box x={x + 109} y={y + 20} w={26} h={40} f="#eeeef5" />
              <Line x={x + 111} y={y + 17} w={17} c="#111" />
              <Lines x={x + 112} y={y + 24} n={7} step={4} w={10} t={1.1} />
              <Box x={x + 104} y={y + 27} w={1.2} h={13} f="#111" />
            </g>
          )}
          <Box x={r - 57} y={b - 7} w={26} h={4} s="#999" />
          <Line x={r - 46} y={b - 5} w={5} />
          <Box x={r - 30} y={b - 7} w={26} h={4} f="#000" />
        </g>
      )}
      {kind === 'diff' && (
        <g>
          <Line x={x + 18} y={y + 6} w={14} t={1.6} c="#111" />
          <Line x={x + 38} y={y + 6} w={20} t={1} />
          {[14, 94].map((dx) => (
            <g key={dx}>
              <Line x={x + dx} y={y + 19} w={52} d="7 42 2 9" />
              <Box x={x + dx} y={y + 22} w={55} h={0.4} f="#ddd" />
              <Lines x={x + dx} y={y + 26} n={2} step={3} w={54} c="#cbb4b4" t={1.1} />
              <Lines x={x + dx} y={y + 36} n={7} step={2.9} w={54} c="#77706f" t={1.2} />
              <Lines x={x + dx} y={y + 37.4} n={5} step={3.9} w={54} c="#e08a83" t={0.9} d="6 14 4 9" />
              <Lines x={x + dx} y={y + 58} n={3} step={2.8} w={54} c="#d6a09c" t={1.1} />
            </g>
          ))}
        </g>
      )}
      {kind === 'prose' && (
        <g>
          {[13, 22, 45, 70].map((dy, i) => (
            <g key={dy}>
              <Line x={x + 8} y={y + dy} w={12} t={1.5} />
              {i > 0 && <Lines x={x + 8} y={y + dy + 5} n={5} step={2.8} w={52} c="#88888d" t={1.1} d="1.2 1.3" />}
              <Box x={x + 7} y={y + dy + 19} w={56} h={i ? 0.6 : 0} f="#c4c4d0" />
            </g>
          ))}
        </g>
      )}
      {(kind === 'task' || kind === 'taskSplit') && (
        <g>
          {[12, 18, 25, 32].map((dy, i) => (
            <g key={dy}>
              <Line x={x + 4} y={y + dy} w={6} t={1} />
              <Line x={x + 18} y={y + dy} w={i === 2 && kind === 'taskSplit' ? 20 : 9} t={i === 2 ? 2.8 : 1.2} c="#66666a" />
            </g>
          ))}
          <Line x={x + 4} y={y + 38} w={7} t={1} />
          <Lines x={x + 18} y={y + 38} n={3} step={2.6} w={32} c="#88888d" t={1.1} d="1 1" />
          <Box x={x + 3} y={b - 6} w={51} h={4} f={black ? '#000' : '#fff'} s="#333" />
          {kind === 'taskSplit' && (
            <g>
              <Box x={x + 57} y={y} w={w - 57} h={b - y} f="#eeeef5" />
              <Line x={x + 62} y={y + 4} w={34} d="10 14" />
              <Box x={x + 58} y={y + 6} w={21} h={1} f="#111" />
              <Box x={x + 59} y={y + 11} w={39} h={18} />
              <Box x={x + 59} y={y + 31} w={39} h={19} />
              <Lines x={x + 62} y={y + 14} n={5} step={2.6} w={32} t={1} c="#77777c" />
              <Lines x={x + 62} y={y + 34} n={5} step={2.6} w={32} t={1} c="#77777c" />
              <Line x={x + 59} y={y + 59} w={9} t={1} />
              <Box x={x + 59} y={y + 61} w={39} h={12} />
            </g>
          )}
        </g>
      )}
    </g>
  );
};

/* ---------- board content ---------- */

type Item = {
  label: string;
  top?: number;
  h?: number;
  wide?: boolean;
  alarm?: boolean;
  dialog?: Dialog;
  art: (h: number) => React.ReactNode;
};

const files = (p: Omit<React.ComponentProps<typeof Files>, 'h'> = {}) => (h: number) => <Files h={h} {...p} />;
const detail = (p: Omit<React.ComponentProps<typeof Detail>, 'h'> = {}) => (h: number) => <Detail h={h} {...p} />;
const viewer = (p: Omit<React.ComponentProps<typeof Viewer>, 'h'> = {}) => (h: number) => <Viewer h={h} {...p} />;
const folderDetail = detail({ kind: 1, on: [1] });
const tasks = (h: number) => <Tasks h={h} />;

type Row = { banner: number; y: number; h: number; items: Item[] };

const POSSIBLE = 'Je peux aussi accéder aux détails des différentes analyses revues possibles';

const ROWS: Row[] = [
  {
    banner: 265, y: 292, h: 122,
    items: [
      { label: "J'arrive par l'intérieur du dossier Viséo", wide: true, art: files() },
      { label: 'Je peux créer un nouveau dossier', wide: true, art: files(), dialog: { kind: 'form', at: [68, 29, 121, 93], black: true } },
      { label: 'Je peux créer un nouveau document', wide: true, art: files(), dialog: { kind: 'tree', at: [67, 25, 120, 96] } },
      { label: 'Je peux filtrer les documents', wide: true, art: files({ menu: [148, 8, 17, 34] }) },
      { label: 'Je peux trier les documents', wide: true, art: files({ menu: [135, 8, 18, 21] }) },
      { label: 'Je peux afficher les documents en liste', wide: true, art: files({ table: true }) },
      { label: 'Je peux rechercher un document par nom', wide: true, art: files({ wide: true }) },
      { label: 'Au hover, je peux sélectionner un élément ou ouvrir un menu', wide: true, art: files({ on: [0] }) },
      { label: 'Je peux accéder aux actions via le menu "…" ou en sélectionnant un élément', wide: true, art: detail({ menu: true }) },
      { label: 'Je peux cumuler des actions, sélectionner plusieurs éléments', wide: true, art: files({ on: [0, 3], menu: [169, 10, 17, 13] }) },
      { label: 'Fonctionne en vue liste', wide: true, art: files({ table: true, menu: [169, 10, 17, 13] }) },
    ],
  },
  {
    banner: 465, y: 492, h: 121,
    items: [
      { label: "J'accède aux détails d'un document", art: detail() },
      { label: "J'accède aux tâches d'un document", wide: true, art: detail({ sparse: 1 }) },
      { label: "J'accède aux discussions d'un document", wide: true, art: detail({ sparse: 2 }) },
      { label: "J'accède aux détails d'un dossier", art: folderDetail },
      { label: "J'accède aux détails d'un lot", art: detail({ kind: 2, on: [4] }) },
      { label: "J'accède à l'historique des éléments", art: detail({ sparse: 3 }) },
      { label: 'Je peux partager / gérer les paramètres de partage', art: folderDetail, dialog: { kind: 'share', at: [66, 31, 120, 90] } },
      { label: 'Je peux comparer des documents', art: folderDetail, dialog: { kind: 'tree', at: [67, 25, 121, 96] } },
      { label: 'Je peux créer une nouvelle tâche', art: folderDetail, dialog: { kind: 'form', at: [66, 23, 121, 98] } },
      { label: 'Je peux importer de nouveaux documents', wide: true, art: folderDetail, dialog: { kind: 'short', at: [70, 39, 116, 82] } },
      { label: "Je peux sélectionner où ranger le fichier d'import", wide: true, art: folderDetail, dialog: { kind: 'import', at: [67, 39, 119, 82] } },
    ],
  },
  {
    banner: 666, y: 696, h: 122,
    items: [
      { label: "Je peux modifier les métadonnées lors de l'import", top: 669, art: folderDetail, dialog: { kind: 'form', at: [67, 17, 120, 105], black: true } },
      { label: "Je peux lancer une nouvelle analyse lors de l'import", top: 669, art: folderDetail, alarm: true, dialog: { kind: 'split', at: [28, 22, 161, 100], black: true } },
      { label: 'Je peux lancer une analyse sur les données des documents', wide: true, art: folderDetail, dialog: { kind: 'split', at: [27, 17, 160, 104], black: true } },
      { label: "Je peux lancer une nouvelle analyse lors de l'import", art: folderDetail, alarm: true, dialog: { kind: 'split', at: [27, 22, 160, 100], black: true } },
      { label: 'Je peux voir les imports et analyses en cours', art: detail({ badge: true }) },
      { label: 'Je peux voir les imports en cours', art: folderDetail, dialog: { kind: 'list', at: [70, 31, 117, 91] } },
      { label: 'Je peux voir les analyses en cours', top: 665, art: folderDetail, dialog: { kind: 'list', at: [70, 31, 117, 91] } },
      { label: "Je peux accéder aux détails d'un lot", top: 660, art: (h) => <LotTable h={h} /> },
      { label: "Je peux accéder au détail d'un document", top: 660, art: (h) => <TextPage h={h} /> },
    ],
  },
  {
    banner: 913, y: 940, h: 122,
    items: [
      { label: '', wide: true, h: 141, art: (h) => <CardGrid h={h} /> },
      { label: 'Je peux aussi accéder aux détails des différentes analyses possibles', art: (h) => <Analysis h={h} /> },
      { label: 'Je peux aussi accéder aux détails des différentes revues possibles', wide: true, art: (h) => <Analysis h={h} alt /> },
      { label: 'Je peux lancer une analyse depuis la page de détails', art: (h) => <Analysis h={h} />, dialog: { kind: 'split', at: [24, 22, 163, 100] } },
      { label: 'Je peux lancer une revue depuis la page de détails', wide: true, art: (h) => <Analysis h={h} alt />, dialog: { kind: 'split', at: [24, 22, 163, 100] } },
      { label: 'Je peux voir les analyses et revues en cours', art: (h) => <Queue h={h} /> },
      { label: "J'accède aux résultats des revues d'un lot", h: 139, art: (h) => <Dashboard h={h} /> },
      { label: "J'accède aux résultats des analyses d'un lot", wide: true, h: 139, art: (h) => <Dashboard h={h} low /> },
      { label: "J'accède aux résultats des analyses d'un lot", h: 139, art: (h) => <Matrix h={h} /> },
      { label: "J'accède aux résultats des revues d'un lot", h: 139, art: (h) => <Matrix h={h} alt /> },
      { label: 'Je survole une donnée pour filtrer la colonne', h: 139, art: (h) => <Matrix h={h} /> },
    ],
  },
  {
    banner: 1106, y: 1133, h: 122,
    items: [
      { label: "J'accède aux résultats de la revue", art: viewer() },
      { label: "J'accède aux actions et détails d'une annotation", art: viewer({ tone: 'mixed' }) },
      { label: 'Je compare le niveau du document avec la clause de référence', art: viewer(), dialog: { kind: 'diff', at: [12, 22, 175, 100] } },
      { label: POSSIBLE, art: viewer(), dialog: { kind: 'prose', at: [59, 14, 128, 109] } },
      { label: "J'ajoute la clause à la base de connaissance de l'entreprise", art: viewer({ tone: 'mixed' }) },
      { label: "Je marque l'annotation comme vérifiée", art: viewer({ tone: 'mixed' }) },
      { label: 'Je peux changer le risque de revue', art: viewer({ tone: 'mixed' }) },
      { label: 'Je vois les clauses, les activités sans ou avec des annotations', art: viewer() },
      { label: "Je peux naviguer vers d'autres revues et analyses", art: viewer({ tone: 'white' }) },
      { label: 'Je vois les clauses, les activités sans ou avec des annotations par catégorie', h: 210, art: viewer() },
      { label: 'Je crée une nouvelle annotation', art: viewer({ form: true }) },
    ],
  },
  {
    banner: 1304, y: 1332, h: 121,
    items: [
      { label: 'Je crée un nouveau commentaire', art: viewer({ form: true }) },
      { label: 'Je vois la liste de mes tâches', art: tasks },
      { label: POSSIBLE, art: tasks, dialog: { kind: 'taskSplit', at: [44, 23, 145, 98] } },
      { label: POSSIBLE, art: tasks, dialog: { kind: 'task', at: [65, 23, 122, 98], black: true } },
      { label: POSSIBLE, art: tasks, dialog: { kind: 'taskSplit', at: [44, 23, 144, 98], black: true } },
    ],
  },
];

const STICKIES: { x: number; y: number; tone: 'yellow' | 'pink' }[] = [
  { x: 472, y: 602, tone: 'yellow' },
  { x: 504, y: 602, tone: 'yellow' },
  { x: 2495, y: 602, tone: 'pink' },
  { x: 672, y: 804, tone: 'pink' },
  { x: 708, y: 804, tone: 'pink' },
  { x: 744, y: 804, tone: 'pink' },
  { x: 876, y: 804, tone: 'yellow' },
  { x: 901, y: 804, tone: 'yellow' },
];

const Wireframe = ({ item, h }: { item: Item; h: number }) => (
  <Shot width={188} height={h} viewBox={`0 0 188 ${h}`} aria-hidden="true">
    <Box x={0} y={0} w={188} h={h} f="#fefefe" />
    {item.art(h)}
    {item.dialog && <rect width={188} height={h} fill="#000" opacity={0.73} />}
    {item.dialog && <DialogArt {...item.dialog} />}
    {item.alarm && <rect x={0.5} y={0.5} width={187} height={h - 1} fill="none" stroke="#a8503f" />}
  </Shot>
);

const BannerRules = () => (
  <Shot width="100%" height={10} viewBox="0 0 188 10" aria-hidden="true">
    <path d="M2 2.5h184M78 7.5h32" stroke="#9cc6d5" strokeWidth={1} />
  </Shot>
);

const Board = () => (
  <Frame aria-label="Wireframes">
    {ROWS.map((row) =>
      row.items.map((item, i) => {
        const x = 463 + i * 202;
        return (
          <React.Fragment key={`${row.y}-${i}`}>
            <Placed $x={x} $y={item.top ?? row.banner}>
              <Banner $wide={item.wide}>{item.label || <BannerRules />}</Banner>
            </Placed>
            <Placed $x={x} $y={row.y}>
              <Wireframe item={item} h={item.h ?? row.h} />
            </Placed>
          </React.Fragment>
        );
      }),
    )}
    {STICKIES.map((s) => (
      <Placed key={`${s.x}-${s.y}`} $x={s.x} $y={s.y}>
        <Sticky $tone={s.tone} />
      </Placed>
    ))}
    <Placed $x={356} $y={349}>
      <Chapter>
        <ChapterNumber>2</ChapterNumber>
        <span>Gestion</span>
        <span>de document</span>
        <ChapterTag />
      </Chapter>
    </Placed>
    <Placed $x={327} $y={970}>
      <Chapter>
        <ChapterNumber>3</ChapterNumber>
        <span>Analyse de</span>
        <span>documents</span>
        <ChapterTag />
      </Chapter>
    </Placed>
  </Frame>
);

/* ---------- icons ---------- */

const Icon = ({ children, w = 40, h = 40, sw = 4 }: { children: React.ReactNode; w?: number; h?: number; sw?: number }) => (
  <svg width={w} height={h} viewBox={`0 0 ${w} ${h}`} fill="none" stroke="currentColor" strokeWidth={sw} overflow="visible" aria-hidden="true">
    {children}
  </svg>
);

const Globe = () => (
  <svg width={36} height={36} viewBox="0 0 36 36" fill="none" stroke="#2f7f97" strokeWidth={1.4} aria-hidden="true">
    <defs>
      <linearGradient id="sea" x1="0" y1="0" x2="0" y2="1">
        <stop offset="0" stopColor="#5cc3ee" />
        <stop offset="1" stopColor="#74dcf8" />
      </linearGradient>
    </defs>
    <circle cx={18} cy={18} r={17} fill="url(#sea)" />
    <ellipse cx={18} cy={18} rx={8.5} ry={17} />
    <path d="M18 1v34M1 18h34" />
  </svg>
);

const Sparkles = () => (
  <svg width={40} height={40} viewBox="0 0 40 40" aria-hidden="true">
    <defs>
      <linearGradient id="spark" x1="0" y1="0" x2="1" y2="1">
        <stop offset="0.15" stopColor="#c583ea" />
        <stop offset="0.8" stopColor="#7b80fb" />
      </linearGradient>
    </defs>
    <g fill="url(#spark)">
      <path d="M20 4c2 0 3 1 3 3 1.5 6 4 8.500 10 10 2 0 3 1 3 3s-1 3-3 3c-6 1.5-8.500 4-10 10 0 2-1 3-3 3s-3-1-3-3c-1.5-6-4-8.500-10-10-2 0-3-1-3-3s1-3 3-3c6-1.5 8.500-4 10-10 0-2 1-3 3-3z" />
      <path d="M33 0h2c.5 3 2 4.500 5 5v2c-3 .5-4.500 2-5 5h-2c-.5-3-2-4.500-5-5V5c3-.5 4.500-2 5-5z" />
      <path d="M5 28h2c.5 3 2 4.500 5 5v2c-3 .5-4.500 2-5 5H5c-.5-3-2-4.500-5-5v-2c3-.5 4.500-2 5-5z" />
    </g>
  </svg>
);

const TOOLS: { name: string; active?: boolean; icon: React.ReactNode }[] = [
  {
    name: 'Select',
    active: true,
    icon: <path d="M2.5 0 40 13v4c-12 0-22 10-22 23h-4L0 3C0 1 1 0 2.5 0z" fill="currentColor" stroke="none" />,
  },
  {
    name: 'Stickers and emojis',
    icon: (
      <>
        <path d="M38 20A18 18 0 1 0 20 38L38 20z" strokeLinejoin="round" />
        <path d="M20 38v-5c0-9 5-13 13-13h5M12 20c0 5 4 8 9 8" />
        <path d="M12 14h4M24 14h4" />
      </>
    ),
  },
  {
    name: 'Templates',
    icon: (
      <>
        <rect x={2} y={2} width={36} height={36} rx={3} />
        <path d="M2 14h36M14 14v24" />
      </>
    ),
  },
  {
    name: 'Sticky note',
    icon: (
      <>
        <path d="M5 2h30a3 3 0 0 1 3 3v13c0 12-8 20-20 20H5a3 3 0 0 1-3-3V5a3 3 0 0 1 3-3z" />
        <path d="M17 38c4 0 5-3 5-7v-7a2 2 0 0 1 2-2h7c4 0 7-2 7-5" />
      </>
    ),
  },
  { name: 'Text', icon: <path d="M2 11V4a1 1 0 0 1 1-1h34a1 1 0 0 1 1 1v7M20 3v35M12 38h16" /> },
  {
    name: 'Shapes and lines',
    icon: (
      <>
        <rect x={2} y={2} width={14} height={14} rx={1} />
        <circle cx={31} cy={9} r={7.5} />
        <path d="M9 25 16 38H2z" strokeLinejoin="round" />
        <path d="M24 38 37 25M25 24h13v13" />
      </>
    ),
  },
  {
    name: 'Pen',
    icon: (
      <path
        d="M23 2 10 15 2 37.5 26 30 38 18M10 15c-2 9 6 16 16 15M2 37.5 11 26"
        strokeLinejoin="round"
        strokeLinecap="round"
      />
    ),
  },
  { name: 'Frame', icon: <path d="M6 0v40M34 0v40M0 6h40M0 34h40" /> },
  {
    name: 'Comment',
    icon: (
      <>
        <path d="M20 2c10 0 18 8 18 18s-8 18-18 18c-3 0-6-1-9-2l-9 2 3-9c-2-3-3-6-3-9C2 10 10 2 20 2z" strokeLinejoin="round" />
        <path d="M10 20h4M18 20h4M26 20h4" />
      </>
    ),
  },
  {
    name: 'More apps',
    icon: (
      <>
        <rect width={40} height={40} rx={5} fill="currentColor" stroke="none" />
        <path d="M12 20h16M20 12v16" stroke="#fff" />
      </>
    ),
  },
];

const Grid = () => (
  <GridLayer aria-hidden="true">
    <defs>
      <pattern id="board-grid" width={557} height={557} patternUnits="userSpaceOnUse" x={61} y={59}>
        <path
          d="M70 0v557M140 0v557M209 0v557M348 0v557M418 0v557M488 0v557M0 70h557M0 140h557M0 209h557M0 348h557M0 418h557M0 488h557"
          stroke="#e9e9e9"
          strokeWidth={2}
        />
        <path d="M1 0v557M279 0v557M0 1h557M0 279h557" stroke="#e1e1e1" strokeWidth={2} />
      </pattern>
    </defs>
    <rect width="100%" height="100%" fill="url(#board-grid)" />
  </GridLayer>
);

export default function App() {
  return (
    <>
      <GlobalStyle />
      <Page>
        <Grid />
        <FrameTitle>Wireframes</FrameTitle>
        <Board />

        <BoardBar as="header">
          <Logo href="#">miro</Logo>
          <BoardName>
            <Globe />
            Viasema
          </BoardName>
          <ButtonPair>
            <IconButton aria-label="Main menu">
              <Icon>
                <g fill="currentColor" stroke="none">
                  <circle cx={20} cy={6} r={4} />
                  <circle cx={20} cy={20} r={4} />
                  <circle cx={20} cy={34} r={4} />
                </g>
              </Icon>
            </IconButton>
            <IconButton aria-label="Export this board">
              <Icon>
                <path d="M2 24v11a3 3 0 0 0 3 3h30a3 3 0 0 0 3-3V24M20 28V5" />
                <path d="m12 12 8-8 8 8" />
              </Icon>
            </IconButton>
          </ButtonPair>
          <Action $kind="upgrade">Upgrade</Action>
        </BoardBar>

        <ShareBar>
          <IconButton $width={118} aria-label="Facilitation tools">
            <Icon w={86} h={40} sw={3.5}>
              <g strokeLinecap="round" strokeLinejoin="round">
                <circle cx={15} cy={24} r={14} />
                <path d="M15 9V5M18 5h2M15 24l6-5" />
                <path d="M15 24l5-4" strokeWidth={5} />
                <path d="M33 14c1-4 4-9 7-10 3 2 3 6 1 10l-4 5h7c5-1 8 3 5 6 3 4-1 12-9 14-4 0-7-2-9-4" />
                <path d="M54 38 59 9l19 22-24 7" />
                <path d="M59 9c5-2 10 1 14 6s7 12 5 16" />
                <path d="M73 15l2-4 4 3 4-8M80 23h4M69 5h1" />
              </g>
            </Icon>
          </IconButton>
          <IconButton aria-label="Activity">
            <Icon>
              <path d="M21 2c10 0 17 8 17 18s-7 18-17 18c-4 0-7-1-9-3l-9 2 2-8c-1-3-2-6-2-9C3 10 11 2 21 2z" strokeLinejoin="round" />
              <path d="M10 20h4l3-4 5 9 3-6h6" strokeLinejoin="round" />
            </Icon>
          </IconButton>
          <IconButton aria-label="Start call">
            <Icon>
              <rect x={2} y={5} width={27} height={30} rx={4} />
              <path d="M29 17 36 12h2v16h-2l-7-5" strokeLinejoin="round" />
            </Icon>
          </IconButton>
          <AccountButton aria-label="Account">
            <Avatar>J</Avatar>
            <Icon w={20} h={20} sw={3}>
              <path d="m2 6 8 8 8-8" strokeLinecap="round" />
            </Icon>
          </AccountButton>
          <Action $kind="present">
            <Icon w={18} h={20} sw={2}>
              <path d="M1 1v18L17 10z" fill="currentColor" strokeLinejoin="round" />
            </Icon>
            Present
          </Action>
          <Action $kind="share">
            <Icon w={26} h={26} sw={2.5}>
              <circle cx={9} cy={6} r={4.5} />
              <path d="M2 25v-3c0-4 3-7 7-7s7 3 7 7v3" />
              <circle cx={19.5} cy={9} r={3.5} />
              <path d="M19 15c3 0 6 3 6 6v4" />
            </Icon>
            Share
          </Action>
        </ShareBar>

        <ToolColumn aria-label="Creation toolbar">
          <ToolPanel>
            <IconButton aria-label="Miro AI">
              <Sparkles />
            </IconButton>
          </ToolPanel>
          <ToolPanel>
            {TOOLS.map((tool) => (
              <IconButton key={tool.name} $active={tool.active} aria-label={tool.name}>
                <Icon>{tool.icon}</Icon>
              </IconButton>
            ))}
          </ToolPanel>
          <ToolPanel>
            <IconButton aria-label="Undo">
              <Icon>
                <path d="M2 9v16h16M3 24c10-14 25-14 35-1" />
              </Icon>
            </IconButton>
            <IconButton $muted aria-label="Redo">
              <Icon>
                <path d="M38 10v16H22M37 25C27 11 12 11 2 24" />
              </Icon>
            </IconButton>
          </ToolPanel>
        </ToolColumn>

        <Scroll $axis="y" />
        <Scroll $axis="x" />

        <ZoomBar>
          <IconButton aria-label="Frames">
            <Icon>
              <path d="M6 0v40M34 0v40M0 6h40M0 34h40M12 16h16M12 24h16" />
            </Icon>
          </IconButton>
          <IconButton aria-label="Zoom out">
            <Icon>
              <path d="M4 20h32" />
            </Icon>
          </IconButton>
          <ZoomLevel>3%</ZoomLevel>
          <IconButton aria-label="Zoom in">
            <Icon>
              <path d="M4 20h32M20 4v32" />
            </Icon>
          </IconButton>
          <IconButton aria-label="Help">
            <Icon>
              <circle cx={20} cy={20} r={18} />
              <path d="M14 16c0-4 3-6 6-6s6 2 6 6c0 4-6 4-6 9M20 28v4" />
            </Icon>
          </IconButton>
        </ZoomBar>
      </Page>
    </>
  );
}
